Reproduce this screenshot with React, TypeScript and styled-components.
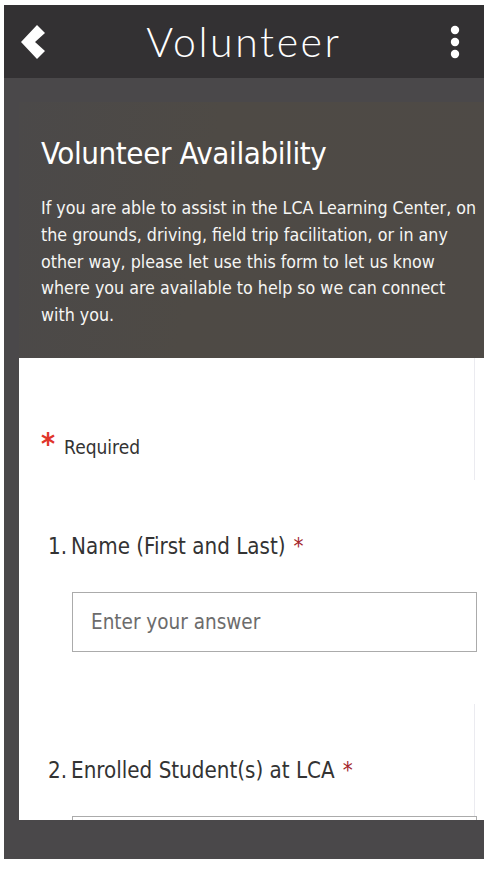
import * as React from 'react';
import styled, { createGlobalStyle } from 'styled-components';

const GlobalStyle = createGlobalStyle`
  html, body {
    margin: 0;
    padding: 0;
    background: #ffffff;
  }
`;

const Frame = styled.div`
  margin: 5px 0 0 4px;
  width: 480px;
  height: 854px;
  background: #4a484a;
  display: flex;
  flex-direction: column;
  overflow: hidden;
  box-sizing: border-box;
  padding-bottom: 39px;
`;

const Header = styled.header`
  height: 73px;
  flex-shrink: 0;
  background: #333133;
  display: flex;
  align-items: center;
  justify-content: space-between;
  padding: 0 24px 0 15px;
  box-sizing: border-box;
  position: relative;
`;

const Title = styled.h1`
  margin: 0;
  font-family: Lato, 'Noto Sans', sans-serif;
  font-weight: 300;
  font-size: 41px;
  letter-spacing: 2.6px;
  color: #ffffff;
  position: absolute;
  left: 0;
  right: 0;
  text-align: center;
  pointer-events: none;
`;

const IconButton = styled.button`
  background: none;
  border: 0;
  padding: 0;
  display: flex;
  align-items: center;
  justify-content: center;
  cursor: pointer;
`;

const Content = styled.main`
  flex: 1;
  display: flex;
  flex-direction: column;
  padding: 24px 0 0 15px;
  min-height: 0;
`;

const Banner = styled.section`
  background: linear-gradient(100deg, #4b4949 0%, #4e4a45 40%, #4e4a46 100%);
  padding: 33px 6px 0 22px;
  height: 256px;
  box-sizing: border-box;
  flex-shrink: 0;
`;

const BannerTitle = styled.h2`
  margin: 0 0 24px;
  font-family: 'DejaVu Sans Condensed', 'DejaVu Sans', sans-serif;
  font-weight: 400;
  font-size: 31px;
  color: #ffffff;
  letter-spacing: -0.4px;
`;

const BannerText = styled.p`
  margin: 0;
  font-family: 'DejaVu Sans Condensed', 'DejaVu Sans', sans-serif;
  font-size: 17.7px;
  line-height: 26.8px;
  color: #f6f6f4;
`;

const Card = styled.div`
  flex: 1;
  background: #ffffff;
  overflow: hidden;
  font-family: 'DejaVu Sans Condensed', 'DejaVu Sans', sans-serif;
`;

const Section = styled.div<{ $bordered?: boolean; $height: number }>`
  width: 456px;
  height: ${p => p.$height}px;
  box-sizing: border-box;
  border-right: 1px solid ${p => (p.$bordered ? '#ebebf0' : 'transparent')};
`;

const RequiredRow = styled.div`
  padding: 71px 0 0 22px;
  display: flex;
  align-items: center;
  font-size: 19px;
  color: #333333;
`;

const RedStar = styled.span`
  color: #e0352b;
  font-size: 30px;
  font-weight: 700;
  margin-right: 9px;
  position: relative;
  top: -3px;
`;

const Question = styled.div`
  padding: 53px 0 0 29px;
`;

const QuestionTitle = styled.div`
  display: flex;
  align-items: baseline;
  font-size: 22.2px;
  color: #333333;
`;

const Number = styled.span`
  margin-right: 4px;
`;

const Star = styled.span`
  color: #a4262c;
  margin-left: 8px;
`;

const AnswerInput = styled.input`
  display: block;
  margin: 33px 0 0 24px;
  width: 405px;
  height: 60px;
  box-sizing: border-box;
  border: 1px solid #ababab;
  padding: 0 18px;
  font-family: 'DejaVu Sans Condensed', 'DejaVu Sans', sans-serif;
  font-size: 20.5px;
  color: #333333;
  outline: none;
  &::placeholder {
    color: #6c6c6c;
  }
`;

const BackIcon = () => (
  <svg width="30" height="36" viewBox="0 0 30 36">
    <polygon points="18,1 26,9 16,18 26,27 18,35 2,18" fill="#ffffff" />
  </svg>
);

const KebabIcon = () => (
  <svg width="10" height="34" viewBox="0 0 10 34">
    <circle cx="5" cy="5" r="4.2" fill="#ffffff" />
    <circle cx="5" cy="17" r="4.2" fill="#ffffff" />
    <circle cx="5" cy="29" r="4.2" fill="#ffffff" />
  </svg>
);

const App = () => {
  return (
    <>
      <GlobalStyle />
      <Frame>
        <Header>
          <IconButton aria-label="Back">
            <BackIcon />
          </IconButton>
          <Title>Volunteer</Title>
          <IconButton aria-label="More">
            <KebabIcon />
          </IconButton>
        </Header>
        <Content>
          <Banner>
            <BannerTitle>Volunteer Availability</BannerTitle>
            <BannerText>
              If you are able to assist in the LCA Learning Center, on the grounds, driving, field trip
              facilitation, or in any other way, please let use this form to let us know where you are
              available to help so we can connect with you.
            </BannerText>
          </Banner>
          <Card>
            <Section $bordered $height={122}>
              <RequiredRow>
                <RedStar>*</RedStar>
                Required
              </RequiredRow>
            </Section>
            <Section $height={224}>
              <Question>
                <QuestionTitle>
                  <Number>1.</Number>Name (First and Last)<Star>*</Star>
                </QuestionTitle>
                <AnswerInput placeholder="Enter your answer" />
              </Question>
            </Section>
            <Section $bordered $height={240}>
              <Question>
                <QuestionTitle>
                  <Number>2.</Number>Enrolled Student(s) at LCA<Star>*</Star>
                </QuestionTitle>
                <AnswerInput placeholder="Enter your answer" />
              </Question>
            </Section>
          </Card>
        </Content>
      </Frame>
    </>
  );
};

export default App;
